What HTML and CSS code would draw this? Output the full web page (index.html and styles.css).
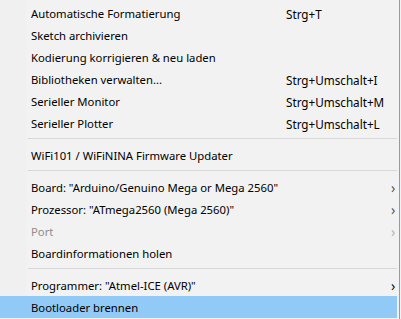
FILE: index.html
```html
<!DOCTYPE html>
<html lang="de">
<head>
    <meta charset="UTF-8">
    <title>Werkzeuge</title>
    <link rel="stylesheet" href="styles.css">
</head>
<body>

<div class="menu">
    <div class="gutter"></div>
    <ul class="items">
        <li class="item"><span class="label">Automatische Formatierung</span><span class="key">Strg+T</span></li>
        <li class="item"><span class="label">Sketch archivieren</span></li>
        <li class="item"><span class="label">Kodierung korrigieren &amp; neu laden</span></li>
        <li class="item"><span class="label">Bibliotheken verwalten...</span><span class="key">Strg+Umschalt+I</span></li>
        <li class="item"><span class="label">Serieller Monitor</span><span class="key">Strg+Umschalt+M</span></li>
        <li class="item"><span class="label">Serieller Plotter</span><span class="key">Strg+Umschalt+L</span></li>
        <li class="sep"></li>
        <li class="item"><span class="label">WiFi101 / WiFiNINA Firmware Updater</span></li>
        <li class="sep"></li>
        <li class="item"><span class="label">Board: "Arduino/Genuino Mega or Mega 2560"</span><span class="arrow">&#8250;</span></li>
        <li class="item"><span class="label">Prozessor: "ATmega2560 (Mega 2560)"</span><span class="arrow">&#8250;</span></li>
        <li class="item disabled"><span class="label">Port</span><span class="arrow">&#8250;</span></li>
        <li class="item"><span class="label">Boardinformationen holen</span></li>
        <li class="sep"></li>
        <li class="item"><span class="label">Programmer: "Atmel-ICE (AVR)"</span><span class="arrow dark">&#8250;</span></li>
        <li class="item active"><span class="label">Bootloader brennen</span></li>
    </ul>
</div>

</body>
</html>
```

FILE: styles.css
```css
html, body {
    margin: 0;
    padding: 0;
}
body {
    width: 401px;
    height: 319px;
    overflow: hidden;
    background-color: #f2f2f2;
    font-family: "Noto Sans", "Open Sans", Arial, sans-serif;
    font-size: 11.3px;
    color: #000;
}
.menu {
    position: relative;
    display: flex;
    width: 399px;
    height: 319px;
    border-right: 1px solid #9a9a9a;
    background-color: #f2f2f2;
}
.gutter {
    position: absolute;
    left: 0;
    top: 0;
    bottom: 0;
    width: 26px;
    background-color: #f0f0f0;
}
.items {
    position: relative;
    list-style: none;
    margin: 0;
    padding: 2px 2px 0 0;
    width: 397px;
}
.item {
    display: flex;
    align-items: center;
    height: 22px;
    padding-left: 31px;
    padding-top: 1px;
    box-sizing: border-box;
    white-space: nowrap;
}
.label {
    flex: 1;
}
.key {
    width: 111px;
    font-size: 11.7px;
}
.arrow {
    width: 5px;
    margin-right: 1px;
    color: #555;
    font-size: 14px;
    line-height: 14px;
}
.arrow.dark {
    color: #111;
}
.disabled .label {
    color: #8d8d8d;
}
.disabled .arrow {
    color: #b5b5b5;
}
.active {
    background-color: #91c9f7;
}
.sep {
    height: 10px;
    position: relative;
}
.sep::after {
    content: "";
    position: absolute;
    left: 28px;
    right: 0;
    top: 4px;
    height: 1px;
    background-color: #d7d7d7;
}
```
